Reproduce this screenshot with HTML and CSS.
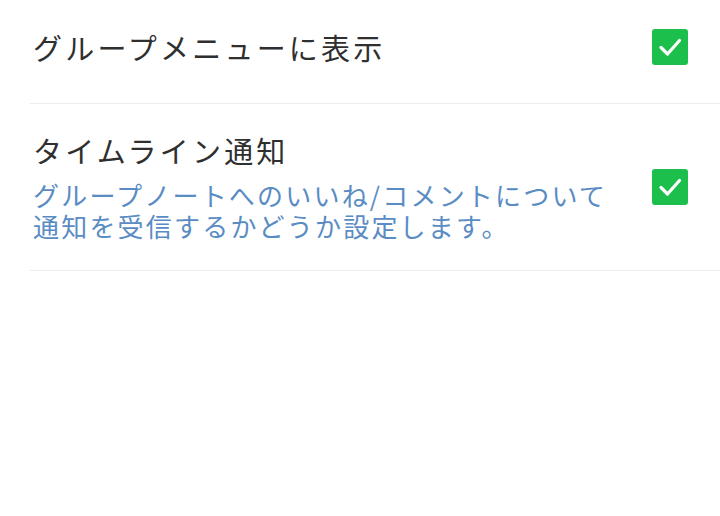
FILE: index.html
```html
<!DOCTYPE html>
<html>
<head>
    <meta charset="utf-8">
    <title>設定</title>
    <link rel="stylesheet" href="styles.css">
</head>
<body>
    <ul class="settings">
        <li class="row row-first">
            <div class="txt">
                <p class="ttl">グループメニューに表示</p>
            </div>
            <span class="chk"><svg viewBox="0 0 36 36" width="36" height="36"><path d="M9 18.5 L15.5 25 L27.5 11.5" fill="none" stroke="#fff" stroke-width="3.2" stroke-linecap="round" stroke-linejoin="round"/></svg></span>
        </li>
        <li class="row row-tall">
            <div class="txt">
                <p class="ttl">タイムライン通知</p>
                <p class="desc">グループノートへのいいね/コメントについて<br>通知を受信するかどうか設定します。</p>
            </div>
            <span class="chk"><svg viewBox="0 0 36 36" width="36" height="36"><path d="M9 18.5 L15.5 25 L27.5 11.5" fill="none" stroke="#fff" stroke-width="3.2" stroke-linecap="round" stroke-linejoin="round"/></svg></span>
        </li>
    </ul>
</body>
</html>
```

FILE: styles.css
```css
html, body {
    margin: 0;
    padding: 0;
    background: #fff;
}

body {
    font-family: "Noto Sans CJK JP", "Noto Sans", sans-serif;
    color: #333;
}

.settings {
    list-style: none;
    margin: 0 0 0 30px;
    padding: 0;
}

.row {
    display: flex;
    align-items: center;
    justify-content: space-between;
    box-sizing: border-box;
    padding: 0 32px 0 3px;
    border-bottom: 1px solid #ececec;
}

.row-first {
    height: 104px;
    padding-bottom: 10px;
}

.row-tall {
    height: 167px;
}

.txt p {
    margin: 0;
}

.ttl {
    font-size: 29px;
    line-height: 34px;
    letter-spacing: 3.2px;
    color: #2f2f2f;
}

.txt .desc {
    margin-top: 12px;
    font-size: 26px;
    line-height: 31px;
    letter-spacing: 2.2px;
    color: #5a8cc4;
}

.chk {
    width: 36px;
    height: 36px;
    border-radius: 3px;
    background: #1cbf4b;
    display: flex;
    flex: none;
}
```
